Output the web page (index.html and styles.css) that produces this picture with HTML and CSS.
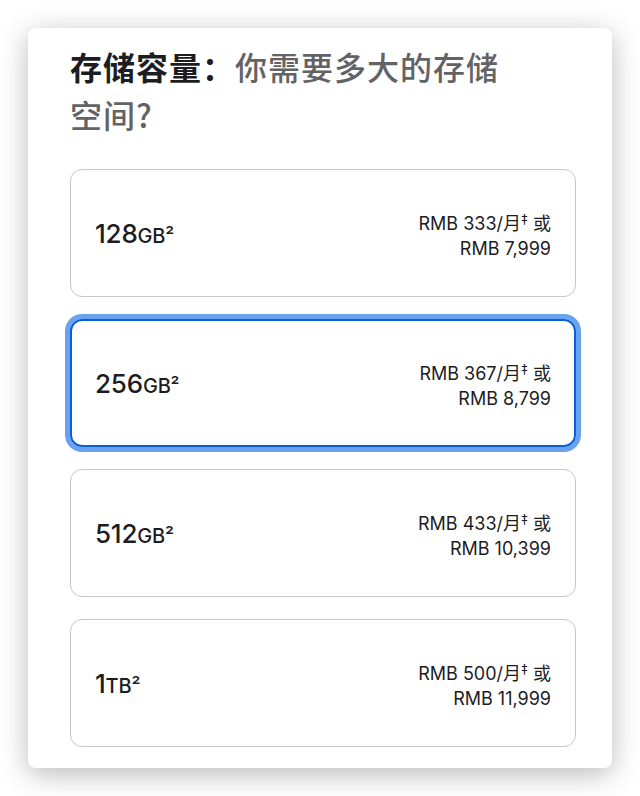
FILE: index.html
```html
<!DOCTYPE html>
<html lang="zh-CN">

<head>
    <meta charset="UTF-8">
    <meta name="viewport" content="width=device-width, initial-scale=1.0">
    <title>存储容量</title>
    <link rel="stylesheet" href="styles.css">
</head>

<body>
    <div class="panel">
        <h2 class="panel-title">存储容量：<span class="sub">你需要多大的存储空间?</span></h2>
        <div class="options">
            <div class="option">
                <div class="size">128<span class="unit">GB²</span></div>
                <div class="price">RMB 333/月<sup>‡</sup> 或<br>RMB 7,999</div>
            </div>
            <div class="option selected">
                <div class="size">256<span class="unit">GB²</span></div>
                <div class="price">RMB 367/月<sup>‡</sup> 或<br>RMB 8,799</div>
            </div>
            <div class="option">
                <div class="size">512<span class="unit">GB²</span></div>
                <div class="price">RMB 433/月<sup>‡</sup> 或<br>RMB 10,399</div>
            </div>
            <div class="option">
                <div class="size">1<span class="unit">TB²</span></div>
                <div class="price">RMB 500/月<sup>‡</sup> 或<br>RMB 11,999</div>
            </div>
        </div>
    </div>
</body>

</html>
```

FILE: styles.css
```css
body {
    margin: 0;
    background-color: #fff;
    font-family: Inter, "Noto Sans CJK SC", sans-serif;
    color: #1d1d1f;
}

.panel {
    margin: 28px;
    height: 740px;
    box-sizing: border-box;
    padding: 14px 36px 22px 42px;
    background: #fff;
    border-radius: 8px;
    box-shadow: 0 6px 28px rgba(0, 0, 0, 0.28);
}

.panel-title {
    margin: 0 0 31px 0;
    max-width: 450px;
    font-family: "Noto Sans CJK SC", sans-serif;
    font-size: 32px;
    line-height: 48px;
    font-weight: 700;
    letter-spacing: 1px;
    color: #1d1d1f;
}

.panel-title .sub {
    font-weight: 500;
    color: #636366;
}

.options {
    display: flex;
    flex-direction: column;
    gap: 22px;
}

.option {
    display: flex;
    align-items: center;
    justify-content: space-between;
    height: 128px;
    box-sizing: border-box;
    padding: 0 24px;
    border: 1px solid #c7c7cc;
    border-radius: 12px;
}

.option.selected {
    border: 2px solid #0a5fd8;
    padding: 0 23px;
    box-shadow: 0 0 0 5px #6aa2f2;
}

.size {
    font-size: 26px;
    font-weight: 500;
    letter-spacing: -0.2px;
}

.unit {
    font-size: 20px;
}

.price {
    margin-top: 6px;
    text-align: right;
    font-size: 18px;
    line-height: 25px;
    color: #1d1d1f;
}

.price sup {
    font-size: 14px;
    line-height: 0;
    vertical-align: 5px;
}
```
